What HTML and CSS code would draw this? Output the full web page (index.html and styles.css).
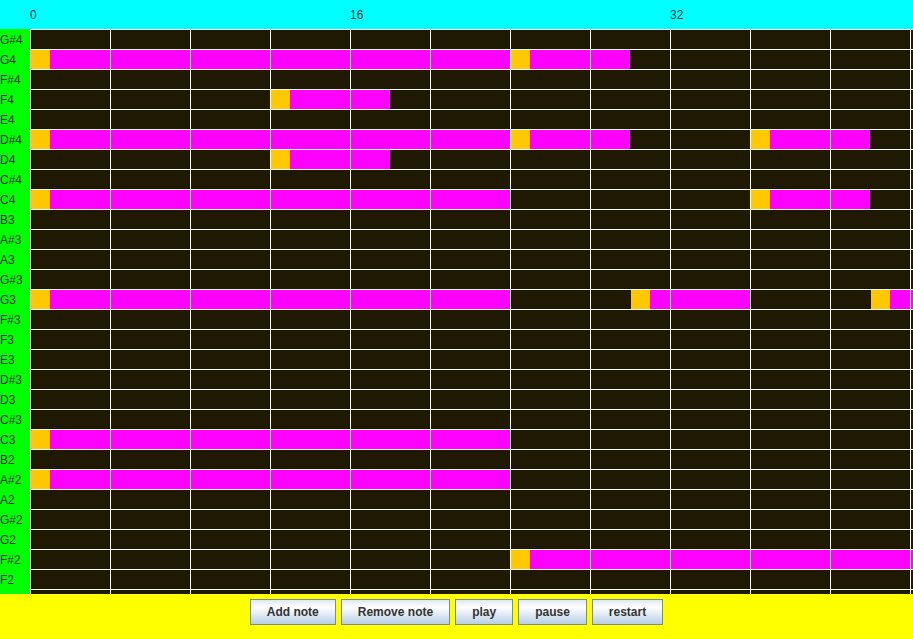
FILE: index.html
```html
<!DOCTYPE html>
<html lang="en">
<head>
  <meta charset="UTF-8">
  <title>Piano Roll</title>
  <link rel="stylesheet" href="styles.css">
</head>
<body>
  <div id="ruler">
    <span class="tick">0</span>
    <span class="tick">16</span>
    <span class="tick">32</span>
  </div>

  <div id="roll"></div>

  <div id="controls">
    <button>Add note</button>
    <button>Remove note</button>
    <button>play</button>
    <button>pause</button>
    <button>restart</button>
  </div>

  <script>
    const BEAT = 20;
    const pitches = ['G#4','G4','F#4','F4','E4','D#4','D4','C#4','C4','B3','A#3','A3','G#3',
      'G3','F#3','F3','E3','D#3','D3','C#3','C3','B2','A#2','A2','G#2','G2','F#2','F2','E2'];

    // [start beat, length in beats]
    const notes = {
      'G4': [[0, 24], [24, 6]],
      'F4': [[12, 6]],
      'D#4': [[0, 24], [24, 6], [36, 6]],
      'D4': [[12, 6]],
      'C4': [[0, 24], [36, 6]],
      'G3': [[0, 24], [30, 6], [42, 6]],
      'C3': [[0, 24]],
      'A#2': [[0, 24]],
      'F#2': [[24, 24]]
    };

    const roll = document.getElementById('roll');

    pitches.forEach(p => {
      const row = document.createElement('div');
      row.className = 'row';

      const label = document.createElement('div');
      label.className = 'pitch';
      label.textContent = p;
      row.appendChild(label);

      const lane = document.createElement('div');
      lane.className = 'lane';
      (notes[p] || []).forEach(([start, len]) => {
        const n = document.createElement('div');
        n.className = 'note';
        n.style.left = (start * BEAT + 1) + 'px';
        n.style.width = (len * BEAT - 1) + 'px';
        lane.appendChild(n);
      });
      row.appendChild(lane);

      roll.appendChild(row);
    });
  </script>
</body>
</html>
```

FILE: styles.css
```css
body {
  margin: 0;
  width: 913px;
  height: 639px;
  overflow: hidden;
  font-family: 'Liberation Sans', Arial, sans-serif;
  font-size: 12px;
  color: #333;
}

#ruler {
  display: flex;
  height: 29px;
  line-height: 30px;
  padding-left: 30px;
  background: #00ffff;
  overflow: hidden;
}

.tick {
  flex: 0 0 320px;
}

#roll {
  height: 565px;
  overflow: hidden;
  background: #00ff00;
}

.row {
  display: flex;
  height: 20px;
}

.pitch {
  flex: 0 0 30px;
  height: 20px;
  line-height: 22px;
  overflow: hidden;
  white-space: nowrap;
  background: #00ff00;
}

.lane {
  position: relative;
  flex: 1;
  border-top: 1px solid #fff;
  background: #1f1903;
}

/* grid lines every 4 beats, drawn over the notes */
.lane::after {
  content: '';
  position: absolute;
  top: -1px;
  left: 0;
  right: 0;
  bottom: 0;
  background: repeating-linear-gradient(to right, #fff 0 1px, transparent 1px 80px);
  z-index: 2;
}

.note {
  position: absolute;
  top: 0;
  bottom: 0;
  background: #ff00ff;
}

.note::before {
  content: '';
  position: absolute;
  top: 0;
  bottom: 0;
  left: 0;
  width: 19px;
  background: #ffc800;
}

#controls {
  display: flex;
  justify-content: center;
  align-items: flex-start;
  gap: 5px;
  height: 45px;
  padding-top: 5px;
  box-sizing: border-box;
  background: #ffff00;
}

button {
  height: 26px;
  padding: 0 16px;
  font-family: 'Liberation Sans', Arial, sans-serif;
  font-size: 12px;
  font-weight: bold;
  color: #333;
  border: 1px solid #7a8a99;
  border-radius: 0;
  background: linear-gradient(to bottom, #dde8f3 0%, #ffffff 30%, #b8cfe5 100%);
  cursor: pointer;
}
```
